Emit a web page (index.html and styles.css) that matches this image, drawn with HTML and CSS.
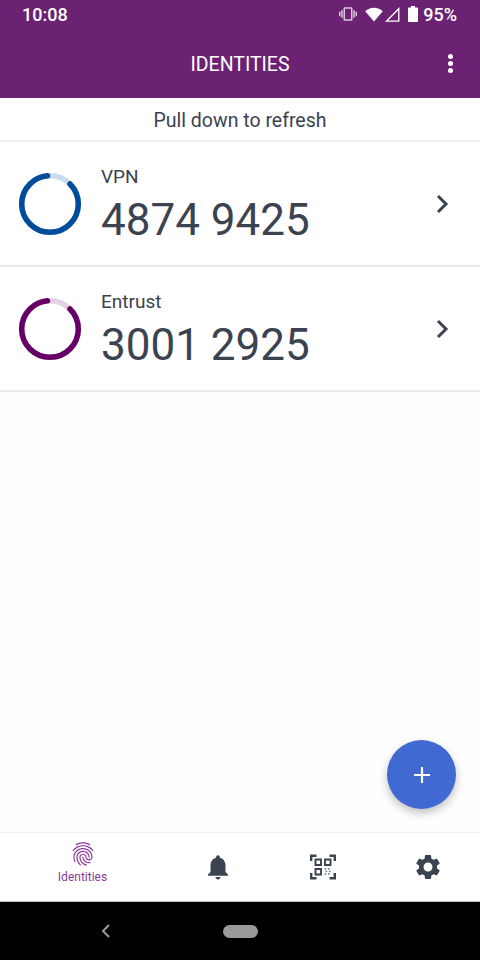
FILE: index.html
```html
<!DOCTYPE html>
<html lang="en">
<head>
  <meta charset="UTF-8" />
  <meta name="viewport" content="width=device-width, initial-scale=1.0" />
  <title>Identities</title>
  <link rel="stylesheet" href="styles.css">
</head>
<body>
  <div class="screen">
    <!-- Status bar + toolbar -->
    <div class="header">
      <div class="status-bar">
        <span class="status-time">10:08</span>
        <div class="status-icons">
          <svg class="icon-vibrate" width="18" height="18" viewBox="0 0 24 24"><path fill="#fff" opacity="0.75" d="M0 15h2V9H0v6zm3 2h2V7H3v10zm19-8v6h2V9h-2zm-3 8h2V7h-2v10zM16.5 3h-9C6.67 3 6 3.67 6 4.5v15c0 .83.67 1.5 1.5 1.5h9c.83 0 1.5-.67 1.5-1.5v-15c0-.83-.67-1.5-1.5-1.5zM16 19H8V5h8v14z"/></svg>
          <svg class="icon-wifi" width="18" height="15" viewBox="0 0 18 15"><path fill="#fff" d="M9 14.5 0.2 4.2C2.6 2.1 5.6 0.8 9 0.8s6.4 1.3 8.8 3.4z"/></svg>
          <svg class="icon-signal" width="15" height="15" viewBox="0 0 15 15"><path fill="none" stroke="#fff" stroke-width="1.3" d="M13.8 1.7v12.4H1.6z"/></svg>
          <svg class="icon-battery" width="10" height="16" viewBox="0 0 10 16"><path fill="#fff" d="M3 0h4v1.5h2c.5 0 1 .4 1 1V15c0 .6-.5 1-1 1H1c-.5 0-1-.4-1-1V2.500c0-.6.5-1 1-1h2z"/></svg>
          <span class="status-battery">95%</span>
        </div>
      </div>
      <div class="toolbar">
        <h1>IDENTITIES</h1>
        <div class="menu-dots"><span></span><span></span><span></span></div>
      </div>
    </div>

    <div class="refresh-hint">Pull down to refresh</div>

    <!-- Token list -->
    <div class="identity-list">
      <div class="identity-row">
        <svg class="ring" width="64" height="64" viewBox="0 0 64 64">
          <circle cx="32" cy="32" r="28.300" fill="none" stroke="#c9dbec" stroke-width="5.500"/>
          <circle cx="32" cy="32" r="28.300" fill="none" stroke="#004c9c" stroke-width="5.500" stroke-linecap="round" pathLength="360" stroke-dasharray="310 50" transform="rotate(-45 32 32)"/>
        </svg>
        <div class="identity-text">
          <div class="identity-name">VPN</div>
          <div class="identity-code">4874 9425</div>
        </div>
        <svg class="chevron" width="16" height="20" viewBox="0 0 16 20"><path fill="none" stroke="#3b4350" stroke-width="3" d="M3 2 11 10 3 18"/></svg>
      </div>
      <div class="identity-row">
        <svg class="ring" width="64" height="64" viewBox="0 0 64 64">
          <circle cx="32" cy="32" r="28.300" fill="none" stroke="#e3d2e6" stroke-width="5.500"/>
          <circle cx="32" cy="32" r="28.300" fill="none" stroke="#660066" stroke-width="5.500" stroke-linecap="round" pathLength="360" stroke-dasharray="310 50" transform="rotate(-45 32 32)"/>
        </svg>
        <div class="identity-text">
          <div class="identity-name">Entrust</div>
          <div class="identity-code">3001 2925</div>
        </div>
        <svg class="chevron" width="16" height="20" viewBox="0 0 16 20"><path fill="none" stroke="#3b4350" stroke-width="3" d="M3 2 11 10 3 18"/></svg>
      </div>
    </div>

    <button class="fab">
      <svg width="20" height="20" viewBox="0 0 20 20"><path fill="none" stroke="#fff" stroke-width="2.200" d="M10 2v16M2 10h16"/></svg>
    </button>

    <!-- Bottom tabs -->
    <div class="tab-bar">
      <div class="tab tab-active">
        <svg width="28" height="28" viewBox="0 0 24 24"><path fill="#8a3a96" d="M17.81 4.470c-.08 0-.16-.02-.23-.06C15.660 3.420 14 3 12.010 3c-1.980 0-3.860.47-5.570 1.410-.24.13-.54.04-.68-.2-.13-.24-.04-.55.2-.68C7.820 2.520 9.860 2 12.010 2c2.130 0 3.990.47 6.030 1.520.25.13.34.43.21.67-.09.18-.26.28-.44.28zM3.500 9.720c-.1 0-.2-.03-.29-.09-.23-.16-.28-.47-.12-.7.99-1.400 2.250-2.500 3.750-3.270C9.980 4.040 14 4.030 17.150 5.650c1.500.77 2.760 1.860 3.750 3.250.16.22.11.54-.12.7-.23.16-.54.11-.7-.12-.9-1.260-2.040-2.250-3.390-2.940-2.870-1.470-6.540-1.470-9.400.01-1.360.7-2.500 1.700-3.400 2.960-.08.14-.23.21-.39.21zm6.250 12.070c-.13 0-.26-.05-.35-.15-.87-.87-1.340-1.430-2.010-2.640-.69-1.230-1.050-2.730-1.050-4.340 0-2.970 2.540-5.390 5.660-5.390s5.660 2.420 5.660 5.390c0 .28-.22.5-.5.5s-.5-.22-.5-.5c0-2.420-2.090-4.390-4.660-4.390-2.570 0-4.660 1.970-4.660 4.390 0 1.440.32 2.770.93 3.850.64 1.150 1.080 1.640 1.850 2.420.19.2.19.51 0 .71-.11.1-.24.15-.37.15zm7.170-1.850c-1.190 0-2.240-.3-3.100-.89-1.490-1.010-2.380-2.650-2.380-4.390 0-.28.22-.5.5-.5s.5.22.5.5c0 1.410.72 2.740 1.940 3.560.71.48 1.540.71 2.540.71.24 0 .64-.03 1.040-.1.27-.05.53.13.58.41.05.27-.13.53-.41.58-.57.11-1.070.12-1.210.12zM14.910 22c-.04 0-.09-.01-.13-.02-1.590-.44-2.630-1.030-3.720-2.100-1.400-1.390-2.170-3.240-2.170-5.220 0-1.620 1.380-2.940 3.080-2.940 1.700 0 3.080 1.320 3.080 2.940 0 1.070.93 1.940 2.080 1.940s2.080-.87 2.080-1.940c0-3.770-3.250-6.830-7.250-6.830-2.840 0-5.440 1.580-6.610 4.030-.39.81-.59 1.760-.59 2.800 0 .78.07 2.010.67 3.610.1.26-.03.55-.29.64-.26.1-.55-.04-.64-.29-.49-1.310-.73-2.610-.73-3.960 0-1.200.23-2.290.68-3.240 1.330-2.790 4.280-4.600 7.510-4.600 4.550 0 8.250 3.510 8.250 7.830 0 1.620-1.380 2.940-3.080 2.940s-3.080-1.320-3.080-2.940c0-1.070-.93-1.940-2.080-1.940s-2.080.87-2.080 1.940c0 1.710.66 3.310 1.870 4.510.95.94 1.860 1.460 3.270 1.850.27.07.42.35.35.61-.05.23-.26.38-.47.38z"/></svg>
        <span>Identities</span>
      </div>
      <div class="tab">
        <svg width="30" height="30" viewBox="0 0 24 24"><path fill="#3b4350" d="M12 22c1.100 0 2-.9 2-2h-4c0 1.100.89 2 2 2zm6-6v-5c0-3.070-1.640-5.640-4.500-6.320V4c0-.83-.67-1.500-1.500-1.500s-1.500.67-1.500 1.500v.68C7.630 5.360 6 7.920 6 11v5l-2 2v1h16v-1l-2-2z"/></svg>
      </div>
      <div class="tab">
        <svg width="26" height="26" viewBox="0 0 26 26">
          <path fill="none" stroke="#3b4350" stroke-width="2.400" d="M1.200 7V1.700h5.300M19.500 1.700h5.300V7M24.800 19v5.300h-5.300M6.500 24.300H1.200V19"/>
          <path fill="none" stroke="#3b4350" stroke-width="1.900" d="M5.500 5.500H11V11H5.500zM15 5.500h5.500V11H15zM5.500 15H11v5.500H5.500z"/>
          <path fill="none" stroke="#6d737d" stroke-width="1.700" stroke-dasharray="1.700 1.700" d="M14.500 15h6.500M15.500 17.500h6M14.500 20h6.500"/>
        </svg>
      </div>
      <div class="tab">
        <svg width="30" height="30" viewBox="0 0 24 24"><path fill="#3b4350" d="M19.140 12.940c.04-.3.06-.61.06-.94 0-.32-.02-.64-.07-.94l2.030-1.580c.18-.14.23-.41.12-.61l-1.920-3.320c-.12-.22-.37-.29-.59-.22l-2.390.96c-.5-.38-1.030-.7-1.620-.94l-.36-2.540c-.04-.24-.24-.41-.48-.41h-3.840c-.24 0-.43.17-.47.41l-.36 2.540c-.59.24-1.130.57-1.620.94l-2.390-.96c-.22-.08-.47 0-.59.22L2.740 8.870c-.12.21-.08.47.12.61l2.030 1.580c-.05.3-.09.63-.09.94s.02.64.07.94l-2.030 1.580c-.18.14-.23.41-.12.61l1.920 3.320c.12.22.37.29.59.22l2.390-.96c.5.38 1.030.7 1.620.94l.36 2.540c.05.24.24.41.48.41h3.840c.24 0 .44-.17.47-.41l.36-2.540c.59-.24 1.130-.56 1.620-.94l2.390.96c.22.08.47 0 .59-.22l1.920-3.320c.12-.22.07-.47-.12-.61l-2.010-1.580zM12 15.600c-1.980 0-3.600-1.620-3.600-3.600s1.620-3.600 3.600-3.600 3.600 1.620 3.600 3.600-1.620 3.600-3.600 3.600z"/></svg>
      </div>
    </div>

    <!-- Android nav bar -->
    <div class="nav-bar">
      <svg class="nav-back" width="10" height="14" viewBox="0 0 10 14"><path fill="none" stroke="#9a9a9a" stroke-width="2" d="M8 1 2 7l6 6"/></svg>
      <div class="nav-home"></div>
    </div>
  </div>
</body>
</html>
```

FILE: styles.css
```css
/* Base Styles */
body {
  margin: 0;
  font-family: Roboto, sans-serif;
  background: #fefefe;
  color: #3b4350;
}
* {
  box-sizing: border-box;
}

.screen {
  position: relative;
  display: flex;
  flex-direction: column;
  width: 480px;
  height: 960px;
  overflow: hidden;
}

/* Header */
.header {
  height: 98px;
  background: #6c2273;
  color: #ffffff;
  flex-shrink: 0;
}
.status-bar {
  display: flex;
  justify-content: space-between;
  align-items: center;
  height: 28px;
  padding: 0 23px 0 22px;
}
.status-time {
  font-size: 18px;
  font-weight: 500;
}
.status-icons {
  display: flex;
  align-items: center;
}
.icon-vibrate {
  margin-right: 8px;
}
.icon-signal {
  margin: 0 8px 0 2px;
}
.status-battery {
  margin-left: 5px;
  font-size: 18px;
  font-weight: 500;
}
.toolbar {
  position: relative;
  display: flex;
  justify-content: center;
  align-items: center;
  height: 70px;
}
.toolbar h1 {
  margin: 2px 0 0;
  font-size: 19.500px;
  font-weight: 400;
}
.menu-dots {
  position: absolute;
  right: 27px;
  top: 26px;
  display: flex;
  flex-direction: column;
  gap: 2px;
}
.menu-dots span {
  width: 5px;
  height: 5px;
  border-radius: 50%;
  background: #ffffff;
}

/* Refresh hint */
.refresh-hint {
  display: flex;
  justify-content: center;
  align-items: center;
  height: 44px;
  padding-top: 2px;
  flex-shrink: 0;
  font-size: 19.500px;
  background: #ffffff;
  border-bottom: 2px solid #eeeeee;
}

/* Identity rows */
.identity-list {
  flex: 1;
}
.identity-row {
  display: flex;
  align-items: center;
  height: 125px;
  padding-left: 18px;
  padding-right: 29px;
  border-bottom: 2px solid #e9e9e9;
  background: #ffffff;
}
.ring {
  flex-shrink: 0;
  margin-right: 19px;
}
.identity-text {
  flex: 1;
  margin-top: 5px;
}
.identity-name {
  font-size: 19px;
  line-height: 20px;
}
.identity-code {
  font-size: 44px;
  line-height: 50px;
  margin-top: 8px;
}

/* Add button */
.fab {
  position: absolute;
  left: 387px;
  top: 740px;
  display: flex;
  justify-content: center;
  align-items: center;
  width: 69px;
  height: 69px;
  padding: 0;
  border: none;
  border-radius: 50%;
  background: #4169d2;
  box-shadow: 0 4px 10px rgba(0, 0, 0, 0.25);
}

/* Bottom tabs */
.tab-bar {
  display: grid;
  grid-template-columns: 165px repeat(3, 105px);
  height: 70px;
  flex-shrink: 0;
  background: #ffffff;
  border-top: 1px solid #f2f2f2;
  border-bottom: 1px solid #bdbdbd;
}
.tab {
  display: flex;
  flex-direction: column;
  align-items: center;
  justify-content: center;
}
.tab-active {
  justify-content: flex-start;
  padding-top: 7px;
  color: #8a3a96;
  font-size: 12px;
}
.tab-active span {
  margin-top: 2px;
  line-height: 15px;
}

/* Android nav bar */
.nav-bar {
  position: relative;
  display: flex;
  justify-content: center;
  align-items: center;
  height: 58px;
  flex-shrink: 0;
  background: #000000;
}
.nav-back {
  position: absolute;
  left: 101px;
  top: 22px;
}
.nav-home {
  width: 35px;
  height: 13px;
  border-radius: 7px;
  background: #9a9a9a;
}
```
